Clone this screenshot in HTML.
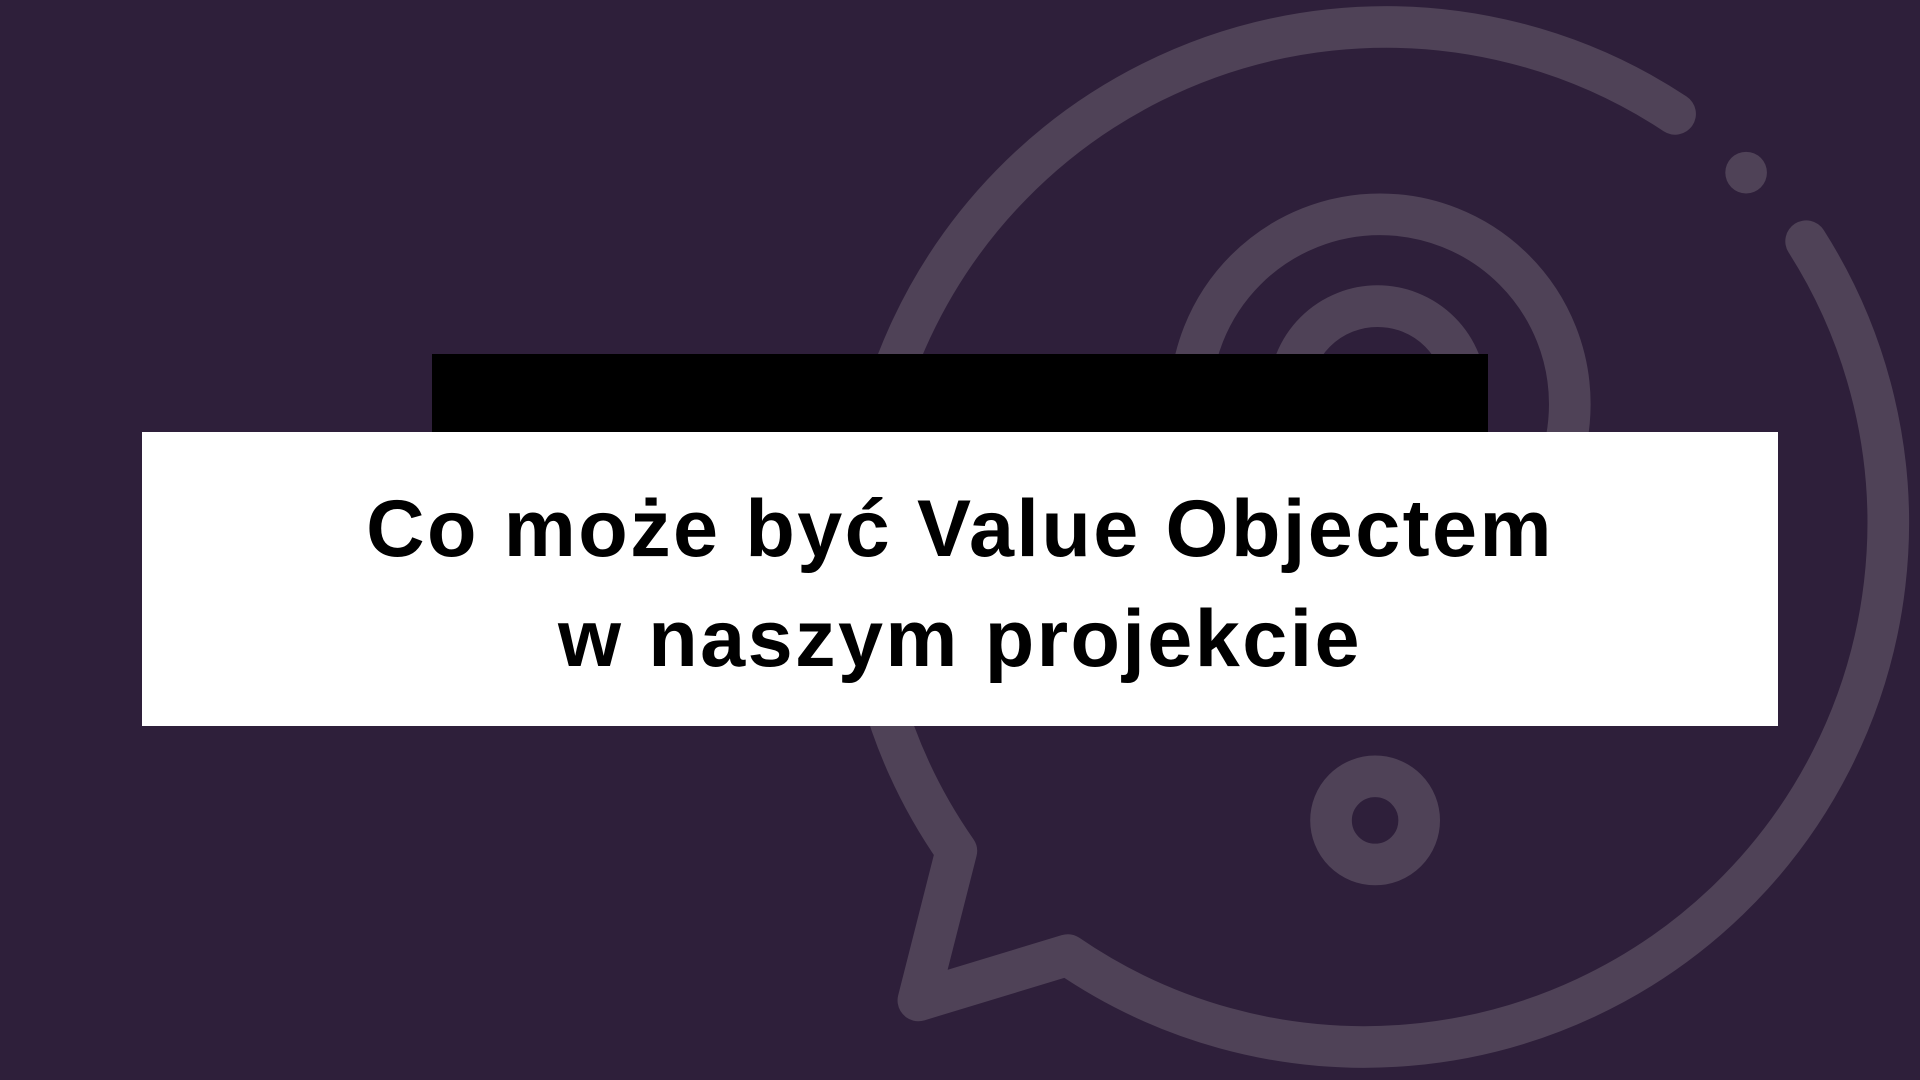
<!DOCTYPE html>
<html><head><meta charset="utf-8"><style>
html,body{margin:0;padding:0;width:1920px;height:1080px;overflow:hidden;background:#2e1f3a}
svg{position:absolute;left:0;top:0}
.bar{position:absolute;left:432px;top:354px;width:1056px;height:78px;background:#000}
.box{position:absolute;left:142px;top:432px;width:1636px;height:294px;background:#fff;display:flex;align-items:center;justify-content:center;text-align:center}
.box div{font-family:"Liberation Sans",sans-serif;font-weight:bold;font-size:81px;line-height:110px;color:#000;letter-spacing:2.4px;position:relative;top:5px}
</style></head><body>
<svg width="1920" height="1080" viewBox="0 0 1568 882" preserveAspectRatio="none">
<g fill="none" stroke="#4f4257" stroke-width="34" stroke-linecap="round" stroke-linejoin="round">
<path d="M1368,93 A428,428 0 0 0 781,695 L750,817 L872,780 A428,428 0 0 0 1475,197"/>
<circle cx="1127" cy="330" r="155"/>
<circle cx="1125" cy="322" r="72"/>
<circle cx="1123" cy="670" r="36"/>
</g>
<circle cx="1426" cy="141" r="17" fill="#4f4257"/>
</svg>
<div class="bar"></div>
<div class="box"><div>Co może być Value Objectem<br>w naszym projekcie</div></div>
</body></html>
